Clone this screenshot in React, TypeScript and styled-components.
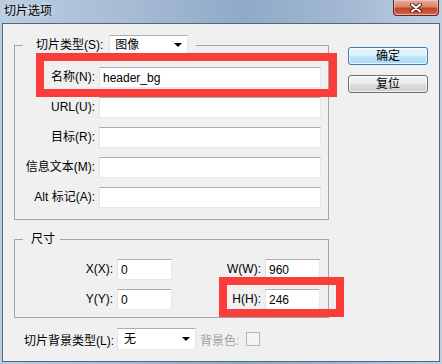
import { Fragment } from "react";
import styled, { createGlobalStyle } from "styled-components";

const GlobalStyle = createGlobalStyle`
  html, body {
    margin: 0;
    padding: 0;
    background: #ffffff;
  }
  body {
    font-family: "Liberation Sans", "Noto Sans CJK SC", sans-serif;
    font-size: 12px;
    color: #000000;
  }
  * {
    box-sizing: border-box;
  }
`;

const Window = styled.div`
  width: 442px;
  height: 364px;
  display: flex;
  flex-direction: column;
  padding: 0 2px 2px;
  background: linear-gradient(
    to right,
    #b9cce2 0%,
    #a6bbd4 30%,
    #8fa9c7 55%,
    #a5bad3 80%,
    #bccfe4 100%
  );
`;

const TitleBar = styled.div`
  height: 23px;
  flex-shrink: 0;
  display: flex;
  align-items: flex-start;
  justify-content: space-between;
`;

const Title = styled.div`
  padding-left: 2px;
  line-height: 22px;
  font-size: 12px;
  text-shadow: 0 0 6px rgba(255, 255, 255, 0.9);
`;

const CloseButton = styled.div`
  width: 46px;
  height: 16px;
  margin-right: 1px;
  display: flex;
  align-items: center;
  justify-content: center;
  border: 1px solid #5e2a24;
  border-top: none;
  border-radius: 0 0 4px 4px;
  background: linear-gradient(#e9ab9c, #d9846f 45%, #c2452b 55%, #cf5535 85%, #e0876a);
  box-shadow: inset 0 0 0 1px rgba(255, 255, 255, 0.35);
`;

const Client = styled.div`
  flex: 1;
  display: flex;
  gap: 19px;
  padding: 11px 0 0 11px;
  background: #f0f0f0;
  border: 1px solid #56677a;
`;

const LeftColumn = styled.div`
  width: 315px;
  display: flex;
  flex-direction: column;
`;

const ButtonColumn = styled.div`
  width: 80px;
  padding-top: 12px;
  display: flex;
  flex-direction: column;
  gap: 10px;
`;

const Group = styled.fieldset<{ $pad: string; $gapTop?: number }>`
  margin: ${(p) => p.$gapTop ?? 0}px 0 0;
  padding: ${(p) => p.$pad};
  min-width: 0;
  border: 1px solid #a5a5a5;
`;

const Legend = styled.legend<{ $pad: string; $h: number }>`
  margin-left: 8px;
  padding: ${(p) => p.$pad};
  height: ${(p) => p.$h}px;
  line-height: ${(p) => p.$h}px;
  display: flex;
  align-items: center;
  gap: 6px;
`;

const FieldList = styled.div`
  display: flex;
  flex-direction: column;
  gap: 9px;
`;

const Field = styled.div`
  position: relative;
  display: grid;
  grid-template-columns: 80px 222px;
  column-gap: 4px;
`;

const Label = styled.label`
  line-height: 21px;
  text-align: right;
  white-space: nowrap;
`;

const TextBox = styled.input`
  width: 100%;
  height: 21px;
  margin: 0;
  padding: 0 3px;
  font: inherit;
  color: #000000;
  background: #ffffff;
  border: 1px solid #e3e9ef;
  border-top-color: #abadb3;
  border-left-color: #e2e3ea;
  outline: none;
`;

const Dropdown = styled.div<{ $w: number; $h: number; $pad: number }>`
  width: ${(p) => p.$w}px;
  height: ${(p) => p.$h}px;
  display: flex;
  align-items: center;
  padding: 0 5px 0 ${(p) => p.$pad}px;
  background: #ffffff;
  border: 1px solid #e3e9ef;
  border-top-color: #abadb3;
  border-left-color: #e2e3ea;
  line-height: 1;
`;

const Arrow = styled.span`
  margin-left: auto;
  width: 0;
  height: 0;
  border-left: 4px solid transparent;
  border-right: 4px solid transparent;
  border-top: 4px solid #000000;
`;

const SizeGrid = styled.div`
  position: relative;
  display: grid;
  grid-template-columns: 98px 55px 85px 55px;
  column-gap: 4px;
  row-gap: 9px;
`;

const Highlight = styled.span<{ $inset: string }>`
  position: absolute;
  inset: ${(p) => p.$inset};
  border: 8px solid #fc3b3b;
  pointer-events: none;
`;

const BottomRow = styled.div`
  margin-top: 10px;
  height: 22px;
  display: flex;
  align-items: center;
`;

const BottomLabel = styled.span`
  width: 100px;
  margin-right: 3px;
  text-align: right;
  white-space: nowrap;
`;

const MutedLabel = styled.span`
  margin: 0 7px 0 4px;
  color: #a3a3a3;
  white-space: nowrap;
`;

const CheckBox = styled.span`
  width: 14px;
  height: 14px;
  border: 1px solid #b6b6b6;
  background: #f4f4f4;
`;

const DialogButton = styled.button<{ $primary?: boolean }>`
  width: 80px;
  height: 18px;
  padding: 0;
  font: inherit;
  line-height: 16px;
  color: #000000;
  border-radius: 3px;
  border: 1px solid ${(p) => (p.$primary ? "#3c7fb1" : "#707070")};
  background: ${(p) =>
    p.$primary
      ? "linear-gradient(#eaf6fd, #d9f0fc 50%, #bee6fd 50%, #a7d9f5)"
      : "linear-gradient(#f2f2f2, #ebebeb 50%, #dddddd 50%, #cfcfcf)"};
  box-shadow: inset 0 0 0 1px rgba(255, 255, 255, 0.7);
`;

const fields = [
  { label: "名称(N):", value: "header_bg", marked: true },
  { label: "URL(U):", value: "" },
  { label: "目标(R):", value: "" },
  { label: "信息文本(M):", value: "" },
  { label: "Alt 标记(A):", value: "" },
];

const sizes = [
  ["X(X):", "0", "W(W):", "960"],
  ["Y(Y):", "0", "H(H):", "246"],
];

const CloseIcon = () => (
  <svg width="12" height="10" viewBox="0 0 12 10">
    <path d="M2 1.5 L10 8.5 M10 1.5 L2 8.5" stroke="#4a1a14" strokeWidth="4" strokeLinecap="round" />
    <path d="M2 1.5 L10 8.5 M10 1.5 L2 8.5" stroke="#ffffff" strokeWidth="2.2" strokeLinecap="round" />
  </svg>
);

const App = () => {
  return (
    <>
      <GlobalStyle />
      <Window>
        <TitleBar>
          <Title>切片选项</Title>
          <CloseButton>
            <CloseIcon />
          </CloseButton>
        </TitleBar>
        <Client>
          <LeftColumn>
            <Group $pad="12px 8px 11px 0">
              <Legend $pad="0 8px 0 13px" $h={20}>
                <span>切片类型(S):</span>
                <Dropdown $w={79} $h={20} $pad={5}>
                  图像
                  <Arrow />
                </Dropdown>
              </Legend>
              <FieldList>
                {fields.map((f) => (
                  <Field key={f.label}>
                    <Label>{f.label}</Label>
                    <TextBox readOnly value={f.value} />
                    {f.marked && <Highlight $inset="-14px -17px -9px 21px" />}
                  </Field>
                ))}
              </FieldList>
            </Group>
            <Group $pad="11px 0 7px 0" $gapTop={10}>
              <Legend $pad="0 5px 0 8px" $h={18}>
                尺寸
              </Legend>
              <SizeGrid>
                {sizes.map((row) => (
                  <Fragment key={row[0]}>
                    <Label>{row[0]}</Label>
                    <TextBox readOnly value={row[1]} />
                    <Label>{row[2]}</Label>
                    <TextBox readOnly value={row[3]} />
                  </Fragment>
                ))}
                <Highlight $inset="18px -16px -7px 204px" />
              </SizeGrid>
            </Group>
            <BottomRow>
              <BottomLabel>切片背景类型(L):</BottomLabel>
              <Dropdown $w={79} $h={22} $pad={6}>
                无
                <Arrow />
              </Dropdown>
              <MutedLabel>背景色:</MutedLabel>
              <CheckBox />
            </BottomRow>
          </LeftColumn>
          <ButtonColumn>
            <DialogButton $primary>确定</DialogButton>
            <DialogButton>复位</DialogButton>
          </ButtonColumn>
        </Client>
      </Window>
    </>
  );
};

export default App;
